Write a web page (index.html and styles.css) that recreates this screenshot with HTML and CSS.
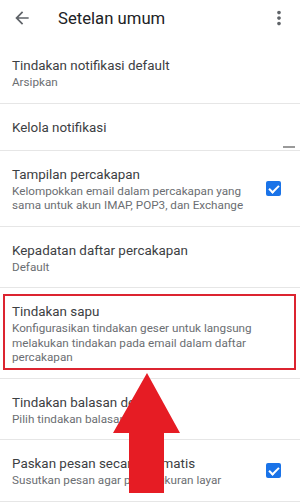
FILE: index.html
```html
<!DOCTYPE html>
<html lang="id">
  <head>
    <meta charset="UTF-8" />
    <meta name="viewport" content="width=device-width, initial-scale=1.0" />
    <title>Setelan umum</title>
    <link rel="stylesheet" href="styles.css">
  </head>
  <body>
    <header class="topbar">
      <svg class="back" viewBox="0 0 24 24" width="20" height="20">
        <path d="M20 11H7.83l5.59-5.59L12 4l-8 8 8 8 1.41-1.41L7.83 13H20v-2z" fill="#5f6368" />
      </svg>
      <h1 class="title">Setelan umum</h1>
      <svg class="more" viewBox="0 0 24 24" width="22" height="22">
        <path d="M12 8c1.1 0 2-.9 2-2s-.9-2-2-2-2 .9-2 2 .9 2 2 2zm0 2c-1.1 0-2 .9-2 2s.9 2 2 2 2-.9 2-2-.9-2-2-2zm0 6c-1.1 0-2 .9-2 2s.9 2 2 2 2-.9 2-2-.9-2-2-2z" fill="#5f6368" />
      </svg>
    </header>

    <ul class="settings">
      <li class="item">
        <div class="text">
          <div class="label">Tindakan notifikasi default</div>
          <div class="desc">Arsipkan</div>
        </div>
      </li>
      <li class="item">
        <div class="text">
          <div class="label">Kelola notifikasi</div>
        </div>
      </li>
      <li class="item">
        <div class="text">
          <div class="label">Tampilan percakapan</div>
          <div class="desc">Kelompokkan email dalam percakapan yang sama untuk akun IMAP, POP3, dan Exchange</div>
        </div>
        <span class="check"></span>
      </li>
      <li class="item">
        <div class="text">
          <div class="label">Kepadatan daftar percakapan</div>
          <div class="desc">Default</div>
        </div>
      </li>
      <li class="item highlight">
        <div class="text">
          <div class="label">Tindakan sapu</div>
          <div class="desc">Konfigurasikan tindakan geser untuk langsung melakukan tindakan pada email dalam daftar percakapan</div>
        </div>
      </li>
      <li class="item">
        <div class="text">
          <div class="label">Tindakan balasan default</div>
          <div class="desc">Pilih tindakan balasan default</div>
        </div>
      </li>
      <li class="item">
        <div class="text">
          <div class="label">Paskan pesan secara otomatis</div>
          <div class="desc">Susutkan pesan agar pas di ukuran layar</div>
        </div>
        <span class="check"></span>
      </li>
    </ul>

    <span class="scroll"></span>

    <svg class="arrow" viewBox="0 0 67 120" width="67" height="120">
      <polygon points="34,0 67,60 51,60 51,120 16,120 16,60 0,60" fill="#e61c24" />
    </svg>
  </body>
</html>
```

FILE: styles.css
```css
body {
  margin: 0;
  font-family: Roboto, "Noto Sans", Arial, sans-serif;
  background: #fff;
  color: #3c4043;
  position: relative;
  overflow: hidden;
}

.topbar {
  height: 36px;
  display: flex;
  align-items: center;
  padding: 0 10px 0 12px;
}

.back {
  margin-right: 26px;
}

.title {
  flex: 1;
  margin: 0;
  font-size: 16.7px;
  font-weight: 400;
  color: #202124;
}

.settings {
  list-style: none;
  margin: 6px 0 0;
  padding: 0;
}

.item {
  position: relative;
  display: flex;
  align-items: center;
  padding: 14px 19px 13px 12px;
  border-bottom: 1px solid #e6e6e6;
}

.text {
  flex: 1;
}

.label {
  font-size: 13.4px;
  line-height: 19px;
  color: #3c4043;
}

.desc {
  font-size: 11.7px;
  line-height: 14.5px;
  color: #6b6e72;
  padding-right: 8px;
}

.check {
  width: 15px;
  height: 15px;
  border-radius: 2px;
  background: #1a73e8;
  position: relative;
  flex-shrink: 0;
}

.check::after {
  content: "";
  position: absolute;
  left: 5px;
  top: 2px;
  width: 4px;
  height: 8px;
  border: solid #fff;
  border-width: 0 2px 2px 0;
  transform: rotate(45deg);
}

.highlight::after {
  content: "";
  position: absolute;
  top: 6px;
  left: 3px;
  right: 4px;
  bottom: 8px;
  border: 2px solid #dc2430;
}

.scroll {
  position: absolute;
  left: 283px;
  top: 146px;
  width: 12px;
  height: 2px;
  background: #9a9a9a;
}

.arrow {
  position: absolute;
  left: 113px;
  top: 373px;
}
```
